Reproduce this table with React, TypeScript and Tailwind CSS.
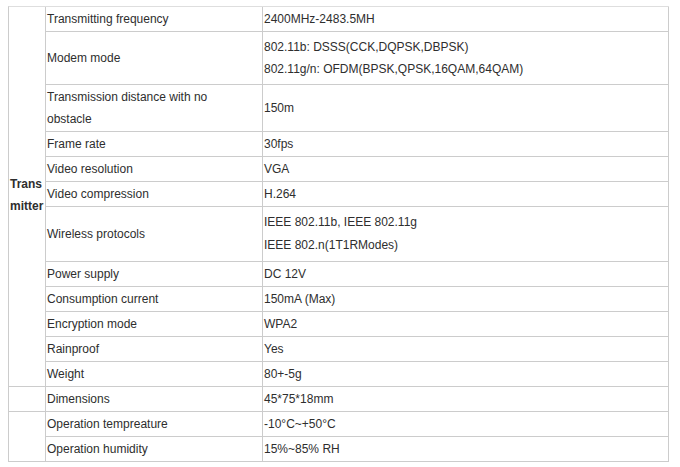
import React from "react";

type Row = { label: React.ReactNode; value: React.ReactNode; lh?: string };

const rows: Row[] = [
  { label: "Transmitting frequency", value: "2400MHz-2483.5MH" },
  {
    label: "Modem mode",
    value: (
      <>
        802.11b: DSSS(CCK,DQPSK,DBPSK)
        <br />
        802.11g/n: OFDM(BPSK,QPSK,16QAM,64QAM)
      </>
    ),
    lh: "leading-[22px]",
  },
  {
    label: (
      <>
        Transmission distance with no
        <br />
        obstacle
      </>
    ),
    value: "150m",
    lh: "leading-[22px]",
  },
  { label: "Frame rate", value: "30fps" },
  { label: "Video resolution", value: "VGA" },
  { label: "Video compression", value: "H.264" },
  {
    label: "Wireless protocols",
    value: (
      <>
        IEEE 802.11b, IEEE 802.11g
        <br />
        IEEE 802.n(1T1RModes)
      </>
    ),
    lh: "leading-[23px]",
  },
  { label: "Power supply", value: "DC 12V" },
  { label: "Consumption current", value: "150mA (Max)" },
  { label: "Encryption mode", value: "WPA2" },
  { label: "Rainproof", value: "Yes" },
  { label: "Weight", value: "80+-5g" },
  { label: "Dimensions", value: "45*75*18mm" },
  { label: "Operation tempreature", value: "-10°C~+50°C" },
  { label: "Operation humidity", value: "15%~85% RH" },
];

export default function App() {
  return (
    <div
      className="w-[680px] h-[467px] bg-white text-[12px] text-[#2e2e2e] pt-[6px] pl-[8px]"
      style={{ fontFamily: '"Liberation Sans", Arial, sans-serif' }}
    >
      <div className="grid w-[661px] grid-cols-[37px_217px_406px] grid-rows-[25px_53px_47px_25px_25px_25px_55px_25px_25px_25px_25px_25px_25px_25px_25px] border-l border-t border-l-[#cccccc] border-t-[#dedede]">
        <div className="row-span-12 col-start-1 row-start-1 border-r border-b border-[#cccccc] flex items-center pl-[1px] pb-[4px] font-bold leading-[22px]">
          <div>
            Trans
            <br />
            mitter
          </div>
        </div>
        <div className="col-start-1 row-start-13 border-r border-b border-[#cccccc]" />
        <div className="col-start-1 row-start-14 row-span-2 border-r border-b border-[#cccccc]" />
        {rows.map((r, i) => (
          <React.Fragment key={i}>
            <div
              className={`col-start-2 border-r border-b border-[#cccccc] flex items-center pl-[1px] whitespace-nowrap ${r.lh ?? "leading-[16px]"}`}
              style={{ gridRowStart: i + 1 }}
            >
              <div>{r.label}</div>
            </div>
            <div
              className={`col-start-3 border-r border-b border-[#cccccc] flex items-center pl-[1px] whitespace-nowrap ${r.lh ?? "leading-[16px]"}`}
              style={{ gridRowStart: i + 1 }}
            >
              <div>{r.value}</div>
            </div>
          </React.Fragment>
        ))}
      </div>
    </div>
  );
}
